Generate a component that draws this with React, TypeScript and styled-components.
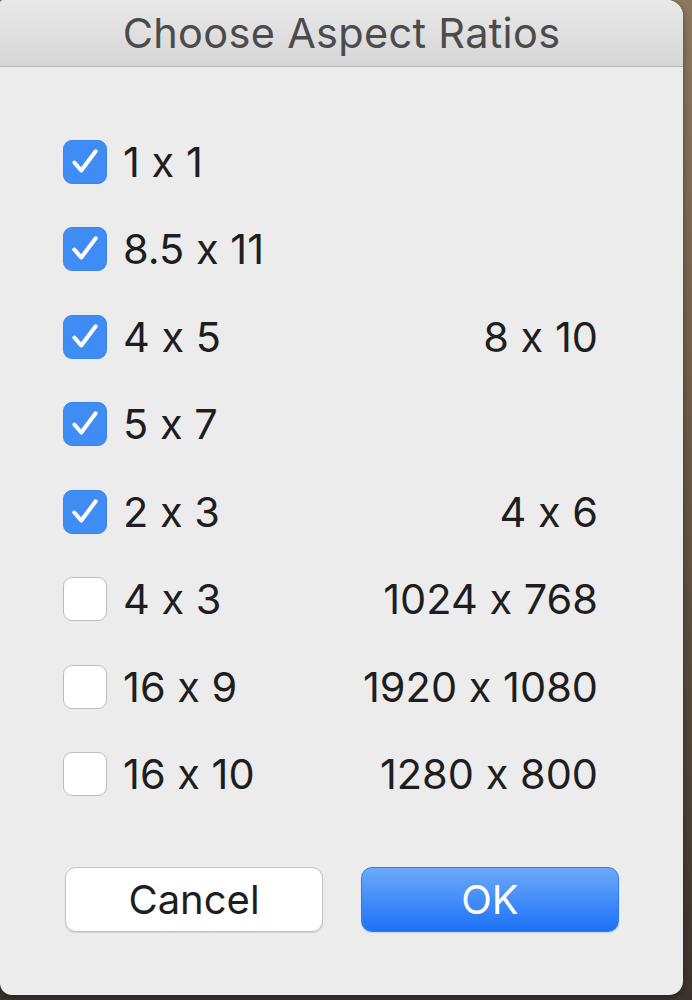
import React from 'react';
import styled, { createGlobalStyle } from 'styled-components';

const GlobalStyle = createGlobalStyle`
  html, body {
    margin: 0;
    padding: 0;
  }
  body {
    background: linear-gradient(180deg, #8c7861 0%, #6e5c49 40%, #3b342c 100%);
    font-family: Inter, "Open Sans", "Liberation Sans", sans-serif;
    font-feature-settings: "calt" 0;
  }
`;

const Desktop = styled.div`
  width: 692px;
  height: 1000px;
  overflow: hidden;
`;

const Dialog = styled.div`
  width: 683px;
  height: 995px;
  background: #ececec;
  border-radius: 4px 16px 14px 12px;
  display: flex;
  flex-direction: column;
  overflow: hidden;
  box-shadow: 0 2px 6px rgba(0, 0, 0, 0.4);
`;

const TitleBar = styled.div`
  height: 66px;
  flex: none;
  background: linear-gradient(180deg, #e9e9e9 0%, #d6d6d6 100%);
  border-bottom: 1px solid #b4b4b4;
  display: flex;
  align-items: center;
  justify-content: center;
`;

const Title = styled.h1`
  margin: 0;
  font-size: 41.5px;
  font-weight: 400;
  color: #4b4b4b;
  letter-spacing: 0.3px;
`;

const Body = styled.div`
  padding: 51px 85px 0 63px;
  display: flex;
  flex-direction: column;
`;

const Row = styled.div`
  height: 87.5px;
  display: grid;
  grid-template-columns: 44px 1fr auto;
  column-gap: 16px;
  align-items: center;
`;

const Box = styled.div<{ $checked: boolean }>`
  width: 44px;
  height: 44px;
  box-sizing: border-box;
  border-radius: 9px;
  background: ${p => (p.$checked ? '#3f8cf4' : '#ffffff')};
  border: 1.5px solid ${p => (p.$checked ? '#3a86ef' : '#bdbdbd')};
  display: flex;
  align-items: center;
  justify-content: center;
`;

const Label = styled.span`
  font-size: 41.5px;
  color: #1e1e1e;
`;

const Extra = styled(Label)`
  text-align: right;
`;

const Buttons = styled.div`
  margin-top: 49px;
  padding-left: 2px;
  display: flex;
  gap: 38px;
`;

const Button = styled.button<{ $primary?: boolean }>`
  flex: none;
  width: 258px;
  height: 65px;
  box-sizing: border-box;
  border-radius: 11px;
  font-family: inherit;
  font-feature-settings: "calt" 0;
  font-size: 40px;
  cursor: pointer;
  color: ${p => (p.$primary ? '#ffffff' : '#1e1e1e')};
  background: ${p =>
    p.$primary ? 'linear-gradient(180deg, #6ba9fb 0%, #1d72f8 100%)' : '#ffffff'};
  border: 1px solid ${p => (p.$primary ? '#2c7cf2' : '#c3c3c3')};
  box-shadow: 0 1px 1px rgba(0, 0, 0, 0.12);
`;

const Check = () => (
  <svg width="32" height="32" viewBox="0 0 30 30">
    <path
      d="M5 15.5 L11.5 23 L25 5"
      fill="none"
      stroke="#ffffff"
      strokeWidth="3.8"
      strokeLinecap="round"
      strokeLinejoin="round"
    />
  </svg>
);

const ratios = [
  { label: '1 x 1', extra: '', checked: true },
  { label: '8.5 x 11', extra: '', checked: true },
  { label: '4 x 5', extra: '8 x 10', checked: true },
  { label: '5 x 7', extra: '', checked: true },
  { label: '2 x 3', extra: '4 x 6', checked: true },
  { label: '4 x 3', extra: '1024 x 768', checked: false },
  { label: '16 x 9', extra: '1920 x 1080', checked: false },
  { label: '16 x 10', extra: '1280 x 800', checked: false },
];

const App: React.FC = () => {
  return (
    <Desktop>
      <GlobalStyle />
      <Dialog>
        <TitleBar>
          <Title>Choose Aspect Ratios</Title>
        </TitleBar>
        <Body>
          {ratios.map(r => (
            <Row key={r.label}>
              <Box $checked={r.checked}>{r.checked && <Check />}</Box>
              <Label>{r.label}</Label>
              <Extra>{r.extra}</Extra>
            </Row>
          ))}
          <Buttons>
            <Button>Cancel</Button>
            <Button $primary>OK</Button>
          </Buttons>
        </Body>
      </Dialog>
    </Desktop>
  );
};

export default App;
